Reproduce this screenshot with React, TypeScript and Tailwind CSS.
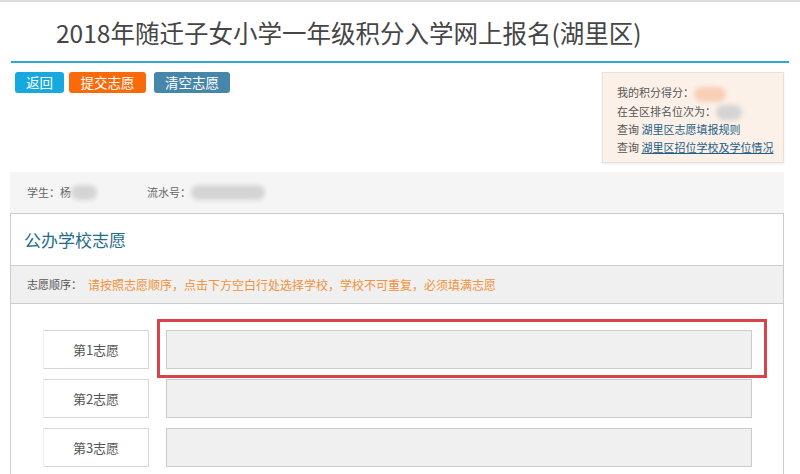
import React from "react";

const Blur = ({ w, color = "bg-[#d4d4d4]" }: { w: string; color?: string }) => (
  <span className={`inline-block align-middle h-[15px] ${w} ${color} rounded-full blur-[2px]`} />
);

const rows = ["第1志愿", "第2志愿", "第3志愿"];

export default function App() {
  return (
    <div
      className="w-[800px] h-[474px] overflow-hidden bg-white border-t-2 border-[#dcdcdc] text-[#555]"
      style={{ fontFamily: '"Noto Sans CJK SC", "Noto Sans", sans-serif' }}
    >
      <div className="h-[59px] pl-[56px] pt-[15px]">
        <h1 className="text-[24.5px] leading-[32px] text-[#454545] font-normal">
          2018年随迁子女小学一年级积分入学网上报名(湖里区)
        </h1>
      </div>
      <div className="mx-[11px] h-[2px] bg-[#29a9d3]" />
      <div className="flex justify-between items-start pl-[15px] pr-[16px] pt-[9px]">
        <div className="flex">
          <button className="w-[49px] h-[21px] rounded-[3px] bg-[#15a9df] text-white text-[13.5px] leading-[21px]">
            返回
          </button>
          <button className="ml-[5px] w-[77px] h-[21px] rounded-[3px] bg-[#fa6a0a] text-white text-[13.5px] leading-[21px]">
            提交志愿
          </button>
          <button className="ml-[8px] w-[76px] h-[21px] rounded-[3px] bg-[#4686a8] text-white text-[13.5px] leading-[21px]">
            清空志愿
          </button>
        </div>
        <div className="w-[182px] h-[91px] bg-[#fcf1e9] border border-[#eadfd7] shadow-[0_1px_2px_rgba(0,0,0,0.08)] pl-[14px] pt-[10px] text-[11px] leading-[18px] text-[#555]">
          <div>
            我的积分得分：<Blur w="w-[32px]" color="bg-[#f8cfb6]" />
          </div>
          <div>
            在全区排名位次为：<Blur w="w-[26px]" />
          </div>
          <div>
            查询 <span className="text-[#1e5f86]">湖里区志愿填报规则</span>
          </div>
          <div>
            查询 <span className="text-[#1e5f86] underline">湖里区招位学校及学位情况</span>
          </div>
        </div>
      </div>
      <div className="mt-[9px] ml-[10px] mr-[16px] h-[41px] bg-[#f5f5f5] flex items-center pl-[17px] text-[11px] text-[#666]">
        <span>学生：杨</span>
        <Blur w="w-[26px]" />
        <span className="ml-[50px]">流水号：</span>
        <Blur w="w-[74px]" />
      </div>
      <div className="ml-[10px] mr-[16px] border border-[#cccccc] border-b-0 h-[300px]">
        <div className="h-[52px] flex items-center pl-[13px] text-[17px] text-[#236d8c] border-b border-[#cccccc]">
          公办学校志愿
        </div>
        <div className="h-[38px] flex items-center pl-[16px] bg-[#f0f0f0] border-b border-[#cccccc] text-[11px]">
          <span className="text-[#555] w-[61px]">志愿顺序：</span>
          <span className="text-[#f3923a] text-[12px]">请按照志愿顺序，点击下方空白行处选择学校，学校不可重复，必须填满志愿</span>
        </div>
        <div className="flex flex-col gap-[10px] pt-[26px] pl-[32px] pr-[31px]">
          {rows.map((r, i) => (
            <div key={r} className="flex h-[39px]">
              <div className="w-[106px] h-[39px] flex items-center justify-center border border-[#d6d6d6] border-l-[#eeeeee] text-[13px] text-[#555]">
                {r}
              </div>
              <div className="relative flex-1 ml-[17px] h-[39px] bg-[#f0f0f0] border border-[#cccccc]">
                {i === 0 && (
                  <div className="absolute left-[-10px] right-[-16px] top-[-12px] bottom-[-10px] border-[3px] border-[#d9434a]" />
                )}
              </div>
            </div>
          ))}
        </div>
      </div>
    </div>
  );
}
